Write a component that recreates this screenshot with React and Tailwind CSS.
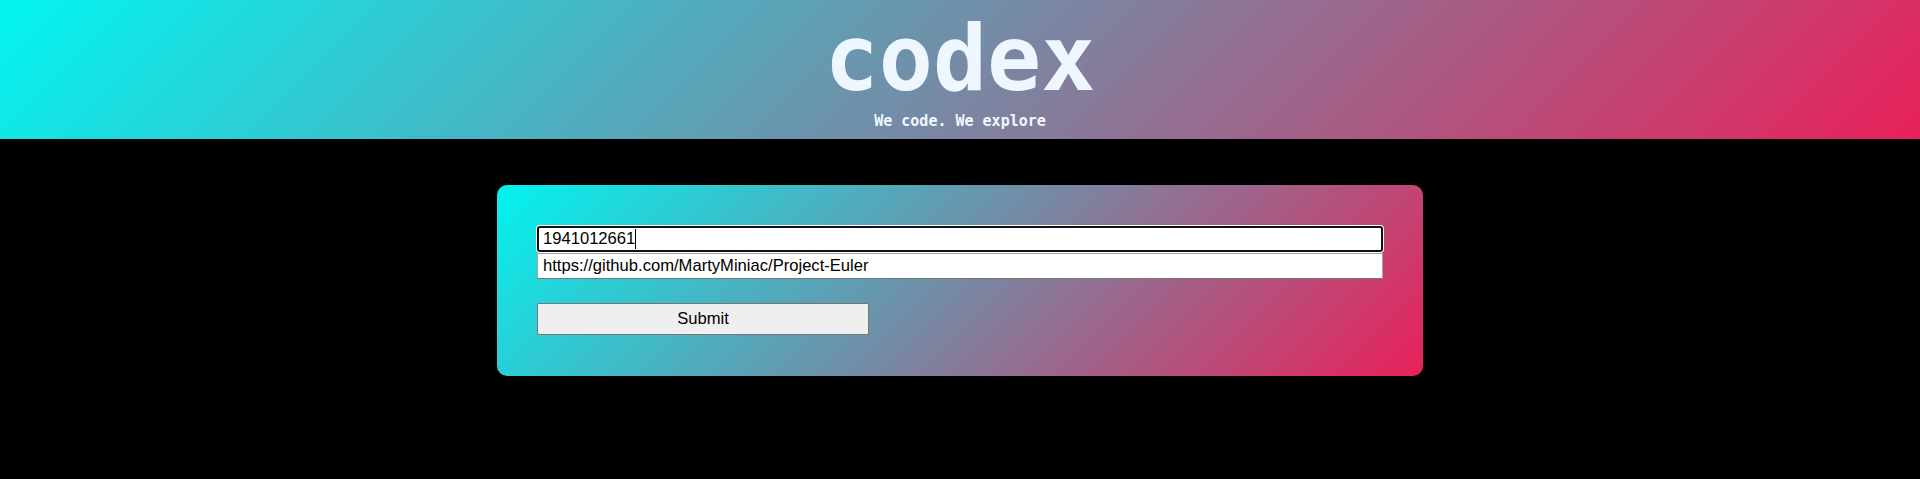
import React from "react";

export default function App() {
  return (
    <div className="min-h-[479px] w-full bg-black">
      <header className="flex h-[139px] flex-col items-center bg-[linear-gradient(135deg,#02f5f1,#e9205a)] pt-[14px]">
        <h1
          className="text-[90px] font-bold leading-none text-[#eef6ff]"
          style={{ fontFamily: '"DejaVu Sans Mono", monospace' }}
        >
          codex
        </h1>
        <p
          className="mt-[10px] text-[15px] font-bold leading-none text-[#f0f8ff]"
          style={{ fontFamily: '"DejaVu Sans Mono", monospace' }}
        >
          We code. We explore
        </p>
      </header>

      <main className="mt-[46px] flex justify-center">
        <form
          className="flex w-[926px] flex-col rounded-[10px] bg-[linear-gradient(135deg,#02f3ef,#e9205a)] px-[40px] pb-[41px] pt-[41px]"
          style={{ fontFamily: '"Liberation Sans", Arial, sans-serif' }}
          onSubmit={(e) => e.preventDefault()}
        >
          <div className="relative">
            <input
              readOnly
              value="1941012661"
              className="block h-[26px] w-full rounded-[3px] border-2 border-[#101010] bg-white pl-[4px] text-[16.6px] text-black shadow-[0_0_0_1px_#ffffff] outline-none"
            />
            <span className="absolute left-[98px] top-[3px] h-[20px] w-px bg-black" />
          </div>
          <input
            readOnly
            value="https://github.com/MartyMiniac/Project-Euler"
            className="mt-px block h-[26px] w-full border border-[#a3a3a3] border-b-[#767676] bg-white pl-[5px] text-[16.6px] text-black outline-none"
          />
          <button
            type="submit"
            className="mt-[24px] h-[32px] w-[332px] rounded-[2px] border border-[#767676] bg-[#efefef] text-[16.6px] text-black"
          >
            Submit
          </button>
        </form>
      </main>
    </div>
  );
}
